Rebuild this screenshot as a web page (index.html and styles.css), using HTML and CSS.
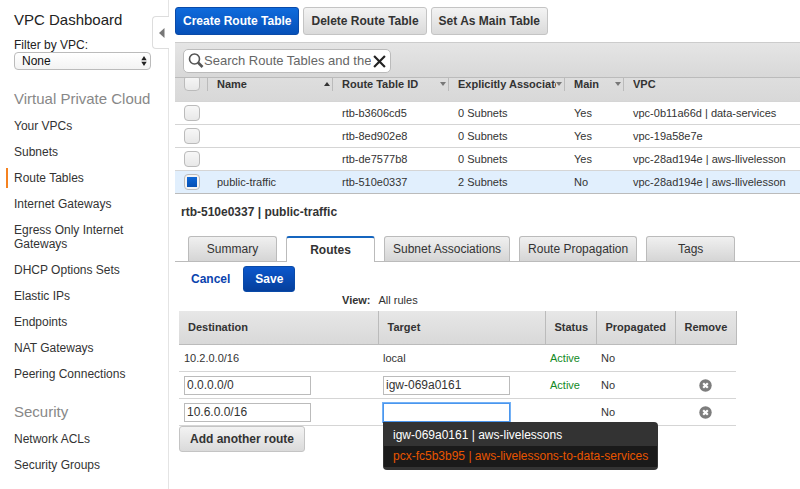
FILE: index.html
```html
<!DOCTYPE html>
<html lang="en">
<head>
<meta charset="utf-8">
<title>VPC Management Console</title>
<link rel="stylesheet" href="styles.css">
</head>
<body>
<div class="app">
  <aside class="sidebar">
    <button class="collapse" type="button" aria-label="Collapse sidebar"><svg width="6" height="10" viewBox="0 0 6 10"><path d="M5.500 0V10L0 5Z" fill="#777"/></svg></button>
    <a class="dashboard" href="#">VPC Dashboard</a>
    <label class="filter-label" for="vpc">Filter by VPC:</label>
    <div class="select-wrap">
      <select id="vpc" class="filter"><option>None</option></select>
      <svg class="select-arrows" width="6" height="10" viewBox="0 0 6 10"><path d="M3 0L5.700 4.200H.3ZM3 10L.3 5.800H5.700Z" fill="#222"/></svg>
    </div>
    <nav>
      <h2>Virtual Private Cloud</h2>
      <ul>
        <li><a href="#">Your VPCs</a></li>
        <li><a href="#">Subnets</a></li>
        <li class="current"><a href="#">Route Tables</a></li>
        <li><a href="#">Internet Gateways</a></li>
        <li><a href="#">Egress Only Internet Gateways</a></li>
        <li><a href="#">DHCP Options Sets</a></li>
        <li><a href="#">Elastic IPs</a></li>
        <li><a href="#">Endpoints</a></li>
        <li><a href="#">NAT Gateways</a></li>
        <li><a href="#">Peering Connections</a></li>
      </ul>
      <h2>Security</h2>
      <ul>
        <li><a href="#">Network ACLs</a></li>
        <li><a href="#">Security Groups</a></li>
      </ul>
    </nav>
  </aside>
  <main>
    <div class="actions">
      <button class="btn primary" type="button">Create Route Table</button>
      <button class="btn" type="button">Delete Route Table</button>
      <button class="btn" type="button">Set As Main Table</button>
    </div>
    <div class="toolbar">
      <div class="search">
        <svg width="16" height="16" viewBox="0 0 16 16" fill="none" stroke="#555"><circle cx="6.500" cy="6" r="5" stroke-width="1.600"/><path d="M10 9.500L14.500 14" stroke-width="2.600"/></svg>
        <input type="text" aria-label="Search route tables" placeholder="Search Route Tables and their attributes">
        <button type="button" aria-label="Clear search"><svg width="13" height="13" viewBox="0 0 12 12"><path d="M1 1L11 11M11 1L1 11" stroke="#222" stroke-width="2"/></svg></button>
      </div>
    </div>
    <table class="grid">
      <colgroup><col class="c-check"><col class="c-name"><col class="c-id"><col class="c-assoc"><col class="c-main"><col></colgroup>
      <thead>
        <tr>
          <th><div class="head head-check"><input type="checkbox" aria-label="Select all"></div></th>
          <th><div class="head"><span>Name</span><svg width="6" height="4" viewBox="0 0 6 4"><path d="M0 4L3 0L6 4Z" fill="#333"/></svg></div></th>
          <th><div class="head"><span>Route Table ID</span><svg width="6" height="4" viewBox="0 0 6 4"><path d="M0 0H6L3 4Z" fill="#777"/></svg></div></th>
          <th><div class="head"><span>Explicitly Associated</span><svg width="6" height="4" viewBox="0 0 6 4"><path d="M0 0H6L3 4Z" fill="#777"/></svg></div></th>
          <th><div class="head"><span>Main</span><svg width="6" height="4" viewBox="0 0 6 4"><path d="M0 0H6L3 4Z" fill="#777"/></svg></div></th>
          <th><div class="head last"><span>VPC</span></div></th>
        </tr>
      </thead>
      <tbody>
        <tr><td><input type="checkbox" aria-label="Select rtb-b3606cd5"></td><td></td><td>rtb-b3606cd5</td><td>0 Subnets</td><td>Yes</td><td>vpc-0b11a66d | data-services</td></tr>
        <tr><td><input type="checkbox" aria-label="Select rtb-8ed902e8"></td><td></td><td>rtb-8ed902e8</td><td>0 Subnets</td><td>Yes</td><td>vpc-19a58e7e</td></tr>
        <tr><td><input type="checkbox" aria-label="Select rtb-de7577b8"></td><td></td><td>rtb-de7577b8</td><td>0 Subnets</td><td>Yes</td><td>vpc-28ad194e | aws-llivelesson</td></tr>
        <tr class="selected"><td><input type="checkbox" checked aria-label="Select rtb-510e0337"></td><td>public-traffic</td><td>rtb-510e0337</td><td>2 Subnets</td><td>No</td><td>vpc-28ad194e | aws-llivelesson</td></tr>
      </tbody>
    </table>
    <h1>rtb-510e0337 | public-traffic</h1>
    <div class="tabs" role="tablist">
      <button type="button" role="tab">Summary</button>
      <button type="button" role="tab" aria-selected="true">Routes</button>
      <button type="button" role="tab">Subnet Associations</button>
      <button type="button" role="tab">Route Propagation</button>
      <button type="button" role="tab">Tags</button>
    </div>
    <section class="panel">
      <div class="edit-actions">
        <a class="cancel" href="#">Cancel</a>
        <button class="btn primary save" type="button">Save</button>
      </div>
      <div class="view"><b>View:</b><span>All rules</span></div>
      <table class="routes">
        <colgroup><col class="r-dest"><col class="r-target"><col class="r-status"><col class="r-prop"><col class="r-remove"></colgroup>
        <thead><tr><th>Destination</th><th>Target</th><th>Status</th><th>Propagated</th><th>Remove</th></tr></thead>
        <tbody>
          <tr><td>10.2.0.0/16</td><td>local</td><td class="active">Active</td><td>No</td><td></td></tr>
          <tr>
            <td><input type="text" value="0.0.0.0/0" aria-label="Destination"></td>
            <td><input type="text" value="igw-069a0161" aria-label="Target"></td>
            <td class="active">Active</td><td>No</td>
            <td class="remove"><button type="button" aria-label="Remove route"><svg width="13" height="13" viewBox="0 0 13 13"><circle cx="6.500" cy="6.500" r="6.200" fill="#7d7d7d"/><path d="M4.200 4.200L8.800 8.800M8.800 4.200L4.200 8.800" stroke="#fff" stroke-width="2.200"/></svg></button></td>
          </tr>
          <tr>
            <td><input type="text" value="10.6.0.0/16" aria-label="Destination"></td>
            <td>
              <div class="combo">
                <input class="focused" type="text" role="combobox" aria-expanded="true" aria-controls="targets" aria-label="Target">
                <ul class="menu" id="targets" role="listbox">
                  <li role="option">igw-069a0161 | aws-livelessons</li>
                  <li class="hover" role="option" aria-selected="true">pcx-fc5b3b95 | aws-livelessons-to-data-services</li>
                </ul>
              </div>
            </td>
            <td></td><td>No</td>
            <td class="remove"><button type="button" aria-label="Remove route"><svg width="13" height="13" viewBox="0 0 13 13"><circle cx="6.500" cy="6.500" r="6.200" fill="#7d7d7d"/><path d="M4.200 4.200L8.800 8.800M8.800 4.200L4.200 8.800" stroke="#fff" stroke-width="2.200"/></svg></button></td>
          </tr>
        </tbody>
      </table>
      <button class="btn add" type="button">Add another route</button>
    </section>
  </main>
</div>
</body>
</html>
```
FILE: styles.css
```css
* { box-sizing: border-box; }
body {
  margin: 0;
  background: #fff;
  color: #333;
  font: 12px/14px "Liberation Sans", Arial, sans-serif;
}
button, input, select { font: inherit; color: inherit; margin: 0; }
a { color: inherit; text-decoration: none; }
ul { list-style: none; margin: 0; padding: 0; }
svg { display: block; flex: none; }

.app { display: flex; min-height: 100vh; }

/* Sidebar */
.sidebar {
  position: relative;
  flex: 0 0 169px;
  padding: 12px 17px 0 14px;
  border-right: 1px solid #e4e4e4;
}
.dashboard { display: block; font-size: 15px; line-height: 16px; color: #222; }
.filter-label { display: block; margin-top: 10px; color: #222; }
.select-wrap { position: relative; }
.filter {
  display: block;
  width: 100%;
  height: 18px;
  padding: 0 7px;
  appearance: none;
  border: 1px solid #bbb;
  border-radius: 4px;
  background: linear-gradient(#fff, #f3f3f3);
  color: #111;
}
.select-arrows { position: absolute; right: 4px; top: 4px; }
.collapse {
  position: absolute;
  right: -1px;
  top: 16px;
  width: 17px;
  height: 33px;
  padding: 0 0 0 6px;
  border: 1px solid #ddd;
  border-right: 0;
  border-radius: 4px 0 0 4px;
  background: #fff;
}
.sidebar h2 {
  margin: 20px 0 0;
  font-size: 15px;
  font-weight: 400;
  line-height: 18px;
  color: #888;
}
.sidebar ul { margin: 5px 0 0 -8px; }
.sidebar li { padding: 6px 0; }
.sidebar li a { display: block; padding-left: 8px; }
.sidebar li.current { padding: 3px 0; }
.sidebar li.current a { padding: 3px 0 3px 6px; border-left: 2px solid #f58220; }
.sidebar ul + h2 { margin-top: 16px; }

/* Buttons */
.btn {
  height: 28px;
  padding: 0 7px;
  border: 1px solid #c4c4c4;
  border-radius: 3px;
  background: linear-gradient(#f3f3f3, #dadada);
  font-weight: 700;
  white-space: nowrap;
}
.primary { border-color: #0a4aa8; background: linear-gradient(#0f6bdc, #0650b8); color: #fff; }

main { flex: 1; min-width: 0; padding: 7px 0 0 6px; }
.actions { display: flex; gap: 4px; }

/* Search bar */
.toolbar {
  margin-top: 7px;
  height: 36px;
  padding: 6px 8px;
  border-top: 1px solid #ccc;
  border-bottom: 1px solid #bbb;
  background: linear-gradient(#e5e5e5, #d8d8d8);
}
.search {
  display: flex;
  align-items: center;
  width: 208px;
  height: 24px;
  padding: 0 4px;
  border: 1px solid #bbb;
  border-radius: 5px;
  background: #fff;
}
.search input {
  flex: 1;
  min-width: 0;
  padding: 0;
  border: 0;
  outline: 0;
  background: none;
  font-size: 13px;
}
.search input::placeholder { color: #666; }
.search button { padding: 0 0 0 2px; border: 0; background: none; }

/* Route table list */
table { border-collapse: collapse; table-layout: fixed; }
th { padding: 0; text-align: left; }
.grid { width: 100%; font-size: 11px; border-bottom: 1px solid #bbb; }
.c-check { width: 33px; }
.c-name { width: 125px; }
.c-id, .c-assoc { width: 116px; }
.c-main { width: 59px; }
.grid thead tr { height: 23px; background: linear-gradient(#dedede, #d8d8d8); }
.grid th { vertical-align: top; }
.head {
  display: flex;
  align-items: center;
  height: 13px;
  padding: 0 2px 2px 9px;
  border-right: 1px solid #bbb;
  line-height: 12px;
}
.head.last { border: 0; }
.head span { flex: 1; overflow: hidden; white-space: nowrap; }
.head-check { align-items: flex-end; overflow: hidden; padding-bottom: 0; }
.grid td { height: 23px; padding: 0 9px; border-top: 1px solid #d5d5d5; white-space: nowrap; }
.grid .selected td { background: #e1effd; }
.grid input {
  display: block;
  flex: none;
  appearance: none;
  width: 16px;
  height: 16px;
  border: 1px solid #bbb;
  border-radius: 4px;
  background: linear-gradient(#f7f7f7, #e8e8e8);
}
.grid input:checked {
  background: linear-gradient(#0e67d6, #0650b4) center / 10px 10px no-repeat, #f4f4f4;
}

/* Detail pane */
h1 { margin: 11px 0 0; padding-left: 6px; font-size: 12px; line-height: 14px; }
.tabs {
  display: flex;
  gap: 9px;
  margin-top: 17px;
  padding-left: 13px;
  border-bottom: 1px solid #bbb;
}
.tabs button {
  min-width: 89px;
  height: 25px;
  padding: 0 8px;
  border: 1px solid #bbb;
  border-bottom: 0;
  border-radius: 3px 3px 0 0;
  background: linear-gradient(#f0f0f0, #d5d5d5);
  white-space: nowrap;
}
.tabs button[aria-selected] {
  height: 26px;
  margin-bottom: -1px;
  border-top: 2px solid #1565bf;
  background: #fff;
  font-weight: 700;
}
.panel { padding: 4px 0 0 4px; }
.edit-actions { display: flex; align-items: center; gap: 13px; padding-left: 12px; }
.cancel { color: #0a43ae; font-weight: 700; }
.save { height: 26px; padding: 0 11px; background: linear-gradient(#0b57cc, #053f9c); }
.view { display: flex; gap: 8px; margin: 1px 0 4px; padding-left: 163px; font-size: 11px; }

/* Routes editor */
.routes { width: 557px; font-size: 11px; }
.r-dest { width: 199px; }
.r-target { width: 167px; }
.r-status { width: 51px; }
.r-prop { width: 79px; }
.r-remove { width: 61px; }
.routes th {
  height: 34px;
  padding: 0 0 0 9px;
  border-right: 1px solid #bbb;
  border-bottom: 1px solid #bbb;
}
.routes thead tr { background: linear-gradient(#e7e7e7, #d8d8d8); }
.routes td { height: 27px; padding: 0 5px; border-bottom: 1px solid #d5d5d5; }
.routes .active { color: #128a25; }
.routes input {
  display: block;
  width: 127px;
  height: 19px;
  padding: 0 2px;
  border: 1px solid #bbb;
  background: #fff;
  font-size: 12px;
}
.routes .focused { border-color: #4a96ee; outline: 1px solid #74b1f5; }
.remove button { display: block; margin: 0 auto; padding: 0; border: 0; background: none; }
.combo { position: relative; }
.menu {
  position: absolute;
  top: 100%;
  left: 0;
  padding: 3px 1px;
  border-radius: 0 4px 4px 4px;
  background: #333;
  color: #fff;
  font-size: 12px;
  white-space: nowrap;
}
.menu li { padding: 0 9px; line-height: 21px; }
.menu .hover { background: #1a1a1a; color: #e85500; }
.add { height: 26px; padding: 0 10px; }
```
